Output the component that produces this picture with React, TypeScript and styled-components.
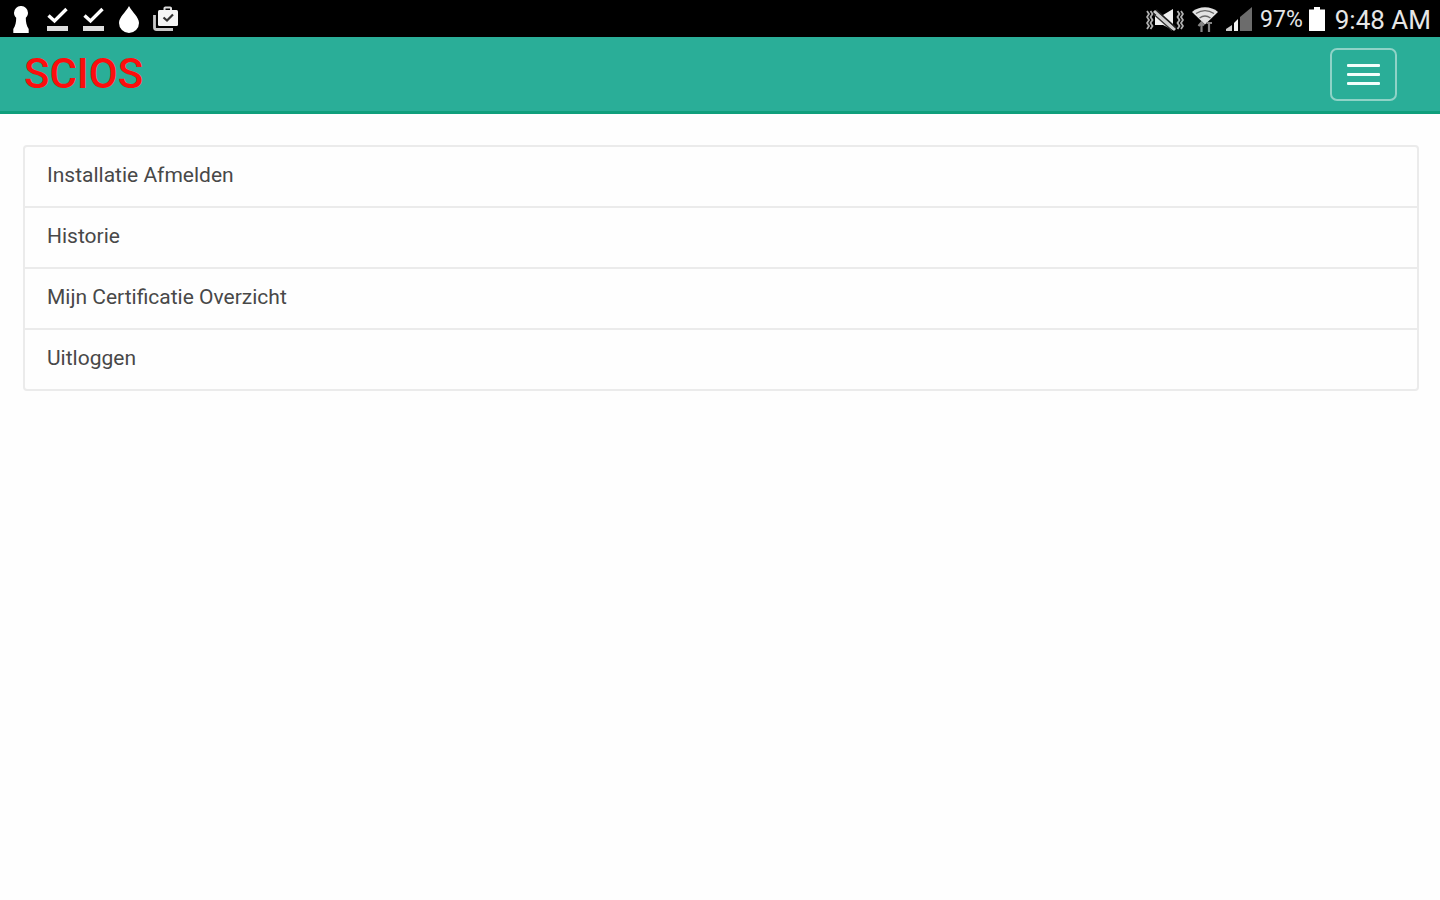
import React from 'react';
import styled, { createGlobalStyle } from 'styled-components';

const GlobalStyle = createGlobalStyle`
  *, *::before, *::after { box-sizing: border-box; }
  body {
    margin: 0;
    background: #fefefe;
    color: #484848;
    font-family: Roboto, "Liberation Sans", sans-serif;
  }
`;

const StatusBar = styled.div`
  display: flex;
  align-items: center;
  justify-content: space-between;
  height: 37px;
  padding: 2px 9px 0 11px;
  background: #000;
  color: #e6e6e6;
`;

const Notifications = styled.div`
  display: flex;
  align-items: center;
  gap: 13px;
`;

const SystemStatus = styled.div`
  display: flex;
  align-items: center;
  gap: 8px;
`;

const Battery = styled.div`
  display: flex;
  align-items: center;
  gap: 6px;
  margin-right: 2px;
`;

const Glyph = styled.svg`
  display: block;
  flex: none;
`;

const StatusText = styled.span<{ $size: number }>`
  font-size: ${({ $size }) => $size}px;
  line-height: 32px;
  white-space: nowrap;
`;

const Navbar = styled.header`
  display: flex;
  align-items: center;
  justify-content: space-between;
  height: 77px;
  padding: 0 43px 0 24px;
  background: #2aae98;
  border-bottom: 3px solid #0f9f7c;
`;

const Brand = styled.a`
  color: #fd0d0d;
  font-size: 42px;
  font-weight: 500;
  line-height: 48px;
  text-decoration: none;
`;

const MenuButton = styled.button`
  display: flex;
  flex-direction: column;
  align-items: center;
  justify-content: center;
  gap: 6px;
  width: 67px;
  height: 53px;
  padding: 0;
  background: transparent;
  border: 2px solid #8fd3c7;
  border-radius: 7px;
  cursor: pointer;
`;

const MenuLine = styled.span`
  width: 33px;
  height: 3px;
  border-radius: 1px;
  background: #f2fffc;
`;

const Main = styled.main`
  padding: 31px 21px 30px 23px;
`;

const List = styled.nav`
  display: flex;
  flex-direction: column;
  border: 2px solid #ebebeb;
  border-radius: 4px;
`;

const ListItem = styled.a`
  padding: 13px 22px 16px;
  color: inherit;
  font-size: 21px;
  line-height: 30px;
  text-decoration: none;

  & + & { border-top: 2px solid #ebebeb; }
`;

const KeyholeIcon = () => (
  <Glyph width="22" height="28" viewBox="-1 0 22 28" aria-hidden="true">
    <path fill="#fff" d="M9 0a6.800 6.800 0 0 0-7 6.800c0 2.300.8 3.600 2.200 5C4.200 16.500 3.500 19.500 1.300 23v4h15.400v-4c-2.200-3.500-2.900-6.500-2.900-11.200C15.200 10.400 16 9.100 16 6.800A6.800 6.800 0 0 0 9 0z" />
  </Glyph>
);

const DoneIcon = () => (
  <Glyph width="23" height="28" viewBox="0 0 23 28" aria-hidden="true">
    <path d="M2.500 9.500l6 5.500L20.500 3" fill="none" stroke="#fff" strokeWidth="3.400" />
    <path d="M1 20h21v5H1z" fill="#dedede" />
  </Glyph>
);

const DropIcon = () => (
  <Glyph width="22" height="28" viewBox="0 0 22 28" aria-hidden="true">
    <path fill="#fff" d="M11 0C8 6 1 11 1 17A10 10 0 0 0 11 27a10 10 0 0 0 10-10C21 11 14 6 11 0z" />
  </Glyph>
);

const CaseIcon = () => (
  <Glyph width="26" height="28" viewBox="0 0 26 28" aria-hidden="true">
    <path d="M1.500 9v12.500a2 2 0 0 0 2 2H20" fill="none" stroke="#c8c8c8" strokeWidth="2.800" />
    <path d="M11.500 5V2.800A1 1 0 0 1 12.500 1.500h4.500A1 1 0 0 1 18 2.800V5" fill="none" stroke="#ddd" strokeWidth="2" />
    <rect x="5" y="4" width="20" height="16" rx="1.500" fill="#f5f5f5" />
    <path d="M10.500 11.500l3.500 3 6-6" fill="none" stroke="#333" strokeWidth="2.200" />
  </Glyph>
);

const MutedVibrateIcon = () => (
  <Glyph width="38" height="24" viewBox="0 0 38 24" aria-hidden="true">
    <g fill="none" stroke="#b0b0b0" strokeWidth="1.800">
      <path d="M1 3l2 3-2 3 2 3-2 3 2 3-2 3" />
      <path d="M4.500 3l2 3-2 3 2 3-2 3 2 3-2 3" />
      <path d="M31.500 3l2 3-2 3 2 3-2 3 2 3-2 3" />
      <path d="M35 3l2 3-2 3 2 3-2 3 2 3-2 3" />
    </g>
    <path d="M9 7h8l10-6v21l-10-5H9z" fill="#f0f0f0" />
    <path d="M10 2l20 18" stroke="#222" strokeWidth="2" />
    <path d="M8 3l21 19" stroke="#cfcfcf" strokeWidth="3" />
    <path d="M8 6.500l18 16" stroke="#333" strokeWidth="1.500" />
  </Glyph>
);

const WifiIcon = () => (
  <Glyph width="26" height="28" viewBox="0 0 26 28" aria-hidden="true">
    <path d="M0 6C7-.2 19-.2 26 6L13 18.500z" fill="#e2e2e2" />
    <path d="M4 7.500c5.500-3.500 12.500-3.500 18 0M7.500 12c3.500-2.500 7.500-2.500 11 0" fill="none" stroke="#666" strokeWidth="1.300" />
    <path d="M9.500 17v9M6.500 20l3-3.500 2.500 3M17 17v9M14.500 17h5.500" fill="none" stroke="#858585" strokeWidth="2.200" />
  </Glyph>
);

const SignalIcon = () => (
  <Glyph width="26" height="25" viewBox="0 0 26 25" aria-hidden="true">
    <path d="M0 24v-2l6-4v6z" fill="#ccc" />
    <path d="M8 24v-8l4-4v12z" fill="#f2f2f2" />
    <path d="M14 24V10L26 0v24z" fill="#6c6c6c" />
  </Glyph>
);

const BatteryIcon = () => (
  <Glyph width="16" height="26" viewBox="0 0 16 26" aria-hidden="true">
    <path d="M5 0h6v2.500h5V24H0V2.500h5z" fill="#fff" />
  </Glyph>
);

const menuItems = ['Installatie Afmelden', 'Historie', 'Mijn Certificatie Overzicht', 'Uitloggen'];

export default function App() {
  return (
    <>
      <GlobalStyle />
      <StatusBar>
        <Notifications>
          <KeyholeIcon />
          <DoneIcon />
          <DoneIcon />
          <DropIcon />
          <CaseIcon />
        </Notifications>
        <SystemStatus>
          <MutedVibrateIcon />
          <WifiIcon />
          <SignalIcon />
          <Battery>
            <StatusText $size={23}>97%</StatusText>
            <BatteryIcon />
          </Battery>
          <StatusText $size={26}>9:48 AM</StatusText>
        </SystemStatus>
      </StatusBar>
      <Navbar>
        <Brand href="#">SCIOS</Brand>
        <MenuButton type="button" aria-label="Menu">
          <MenuLine />
          <MenuLine />
          <MenuLine />
        </MenuButton>
      </Navbar>
      <Main>
        <List>
          {menuItems.map((label) => (
            <ListItem key={label} href="#">{label}</ListItem>
          ))}
        </List>
      </Main>
    </>
  );
}
